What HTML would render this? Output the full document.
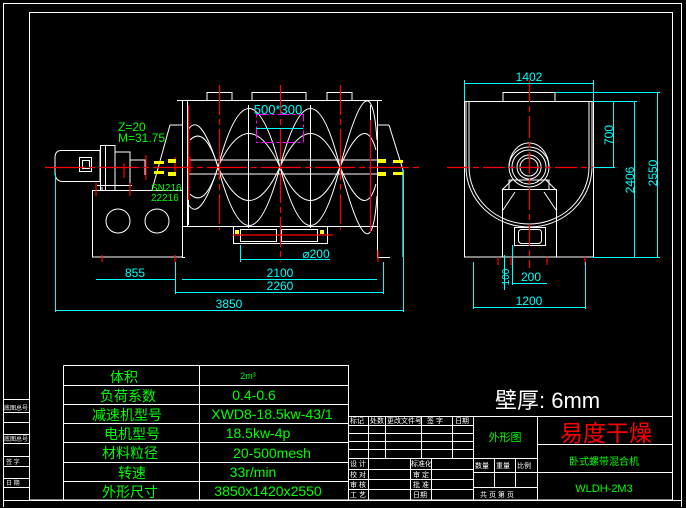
<!DOCTYPE html>
<html><head><meta charset="utf-8"><style>
html,body{margin:0;padding:0;background:#000;}
svg{display:block;}
text{font-family:"Liberation Sans","Noto Sans CJK SC",sans-serif;}
</style></head><body>
<svg width="686" height="508" viewBox="0 0 686 508" xmlns="http://www.w3.org/2000/svg">
<rect width="686" height="508" fill="#000"/>
<g fill="none" stroke="#fff" stroke-width="1">
<path d="M3.5 507 V3.5 H681.5 V507"/>
<path d="M29.5 500 V12.5 H672.5 V500 H29.5"/>
<path d="M3.5 500.5 H681.5"/>
<path d="M3.5 399.5H29.5M3.5 412.5H29.5M3.5 422.5H29.5M3.5 434.5H29.5M3.5 443.5H29.5M3.5 456.5H29.5M3.5 466.5H29.5M3.5 478.5H29.5M3.5 487.5H29.5"/>
<path d="M63.5 365.5H348.5V500M63.5 365.5V500M199.5 365.5V500"/>
<path d="M63.5 385.5H348.5M63.5 404.5H348.5M63.5 423.5H348.5M63.5 442.5H348.5M63.5 462.5H348.5M63.5 481.5H348.5"/>
<path d="M348.5 416.5H672.5"/>
<path d="M368.5 416.5V500M385.5 416.5V458.5M421.5 416.5V458.5M452.5 416.5V458.5M473.5 416.5V500M410.5 458.5V500M431.5 458.5V500M537.5 416.5V500"/>
<path d="M348.5 425.5H473.5M348.5 433.5H473.5M348.5 441.5H473.5M348.5 449.5H473.5M348.5 458.5H537.5"/>
<path d="M348.5 469.5H473.5M348.5 479.5H473.5M348.5 489.5H473.5"/>
<path d="M473.5 472.5H537.5M473.5 487.5H537.5M494.5 458.5V487.5M515.5 458.5V487.5"/>
<path d="M537.5 444.5H672.5M537.5 472.5H672.5"/>

<path d="M177 100.5H382"/>
<path d="M207 100V92.5H232V100M252 100V92.5H306V100M327 100V92.5H352V100"/>
<path d="M182.5 100V257M377.5 100V257M187.5 100V226"/>
<path d="M182 226.5H377"/>
<path d="M170 125L152 190M389 125L403 170V257M377 257.5H390M182 257.5H185"/>
<path d="M170 125H182M378 125H389"/>
<rect x="92.5" y="190.5" width="90" height="66.5"/>
<circle cx="118" cy="221" r="12"/><circle cx="157" cy="221" r="12"/>
<path d="M62 150.5H100V181.5H62Q55 181 55 172V158Q55 150 62 150.5Z"/>
<rect x="79.5" y="157.5" width="12" height="14"/><rect x="82.5" y="160.5" width="7" height="8"/>
<path d="M100.5 145V190M105.5 145V190M100 145.5H115V190M115 152H130V188M130 160H145V175"/>
<path d="M97 185.5H132M102 187V190"/>
<path d="M188 130 Q200 110 218 167 Q249 50 280 167 Q311 284 340 167 Q371 50 377 140"/>
<path d="M188 204 Q200 224 218 167 Q249 284 280 167 Q311 50 340 167 Q371 284 377 196"/>
<path d="M190 140 Q205 125 218 167 Q249 100 280 167 Q311 234 340 167 Q365 110 376 150"/>
<path d="M190 194 Q205 209 218 167 Q249 234 280 167 Q311 100 340 167 Q365 224 376 184"/>
<path d="M248.5 105V228M310.5 105V228M370.5 105V228M188.5 110V225"/>
<path d="M189 160H377M189 174H377"/>
<path d="M233.5 227V243.5H327.5V227"/>
<rect x="240.5" y="229.5" width="36" height="12"/><rect x="281.5" y="229.5" width="36" height="12"/>
<rect x="464.5" y="101.5" width="129" height="155.5"/>
<path d="M503 101V92.5H555V101"/>
<path d="M466 101V167A63 60 0 0 0 592 167V101"/>
<path d="M469 101V167A60 57 0 0 0 589 167V101"/>
<rect x="502.5" y="189.5" width="54" height="67.5"/>
<path d="M502 190L512 180M556 190L546 180M503 210L515 192M556 210L544 192"/>
<path d="M509 189V180H549V189"/>
<circle cx="529" cy="167" r="20"/><circle cx="529" cy="167" r="17"/><circle cx="529" cy="167" r="12"/><circle cx="529" cy="167" r="9"/>
<path d="M509 167A20 24 0 0 1 549 167"/>
<rect x="514.5" y="227.5" width="31" height="18"/>
<rect x="518.5" y="229.5" width="23" height="14" rx="3"/>
</g>
<g stroke="#f00" stroke-width="1.2" fill="none">
<path d="M45 167.5H420" stroke-dasharray="40 4 6 4"/>
<path d="M447 167.5H615" stroke-dasharray="22 4 6 4"/>
<path d="M529.5 80V268" stroke-dasharray="22 4 6 4"/>
<path d="M219.5 85V150M280.5 85V262M340.5 85V150M219.5 150V230M340.5 150V230" stroke-dasharray="30 4 6 4"/>
<path d="M188.5 105V200M370.5 120V232"/>
<path d="M124 163V178M146 155V180M96 183V196M130 183V196M102 255V262M175 255V262M378 250V262M190 157V172M175 157V175"/>
<path d="M233 235H333M498 257V265M511 257V265M547 257V265M585 257V265"/>
</g>
<g fill="#ff0">
<rect x="154" y="161" width="10" height="3"/><rect x="154" y="171" width="10" height="3"/>
<rect x="168" y="159" width="8" height="4"/><rect x="168" y="172" width="8" height="4"/>
<rect x="378" y="159" width="8" height="4"/><rect x="378" y="172" width="8" height="4"/>
<rect x="393" y="160" width="10" height="3"/><rect x="393" y="172" width="10" height="3"/>
<rect x="235" y="230" width="4" height="4"/><rect x="320" y="230" width="4" height="4"/>
</g>
<rect x="256.5" y="114.5" width="47" height="28" fill="none" stroke="#f0f" stroke-dasharray="12 3 3 3"/>
<g stroke="#0ff" stroke-width="1" fill="none">
<path d="M256 128.5H303"/>
<path d="M96 279.5H175M182 279.5H377M175 292.5H383M55 310.5H403M240 259.5H330"/>
<path d="M55.5 173V312M403.5 170V312M175.5 262V294M383.5 262V294M240.5 245V262"/>
<path d="M464 83.5H593M464.5 80V101M593.5 80V101"/>
<path d="M555 92.5H660M593 101.5H637M593 257.5H660M593 167.5H615"/>
<path d="M613.5 101V167M634.5 101V257M657.5 92V257"/>
<path d="M512 283.5H547M473 307.5H585M473.5 262V309M585.5 262V309M512.5 245V285M504.5 255V290"/>
</g>
<g fill="#0ff" font-size="12" text-anchor="middle">
<text x="135" y="277">855</text>
<text x="280" y="277">2100</text>
<text x="280" y="290">2260</text>
<text x="229" y="308">3850</text>
<text x="316" y="258">⌀200</text>
<text x="278" y="114" font-size="13">500*300</text>
<text x="529" y="81">1402</text>
<text x="531" y="281">200</text>
<text x="529" y="305">1200</text>
<text transform="translate(613,135) rotate(-90)">700</text>
<text transform="translate(634,180) rotate(-90)">2406</text>
<text transform="translate(657,173) rotate(-90)">2550</text>
<text transform="translate(509,277) rotate(-90)" font-size="10">100</text>
</g>
<g fill="#0f0">
<text x="118" y="131" font-size="12">Z=20</text>
<text x="118" y="142" font-size="12">M=31.75</text>
<text x="151" y="191" font-size="10">SN216</text>
<text x="151" y="201" font-size="10">22216</text>
</g>
<g fill="#0f0" font-size="14" text-anchor="middle">
<text x="124" y="382">体积</text>
<text x="128" y="401">负荷系数</text>
<text x="127" y="420">减速机型号</text>
<text x="132" y="439">电机型号</text>
<text x="130" y="458">材料粒径</text>
<text x="132" y="478">转速</text>
<text x="130" y="497">外形尺寸</text>
<text x="248" y="379" font-size="9">2m³</text>
<text x="254" y="400">0.4-0.6</text>
<text x="272" y="419">XWD8-18.5kw-43/1</text>
<text x="258" y="438">18.5kw-4p</text>
<text x="272" y="458">20-500mesh</text>
<text x="253" y="477">33r/min</text>
<text x="268" y="496">3850x1420x2550</text>
<text x="505" y="441" font-size="11">外形图</text>
<text x="604" y="465" font-size="10">卧式螺带混合机</text>
<text x="604" y="492" font-size="11">WLDH-2M3</text>
</g>
<text x="606" y="441" fill="#f00" font-size="23" text-anchor="middle" font-family="Liberation Serif, Noto Serif CJK SC, serif">易度干燥</text>
<text x="495" y="408" fill="#fff" font-size="22">壁厚: 6mm</text>
<g fill="#fff" font-size="7">
<text x="350" y="423">标记</text><text x="370" y="423">处数</text><text x="387" y="423">更改文件号</text><text x="427" y="423">签 字</text><text x="455" y="423">日期</text>
<text x="350" y="466">设 计</text><text x="350" y="477">校 对</text><text x="350" y="487">审 核</text><text x="350" y="497">工 艺</text>
<text x="411" y="466">标准化</text><text x="413" y="477">审 定</text><text x="413" y="487">批 准</text><text x="413" y="497">日期</text>
<text x="475" y="468">数量</text><text x="496" y="468">重量</text><text x="517" y="468">比例</text>
<text x="480" y="497">共 页 第 页</text>
<text x="4" y="410" font-size="6">底图总号</text>
<text x="4" y="441" font-size="6">底图总号</text>
<text x="6" y="464" font-size="6">签  字</text>
<text x="6" y="485" font-size="6">日  期</text>
</g>
</svg>
</body></html>
